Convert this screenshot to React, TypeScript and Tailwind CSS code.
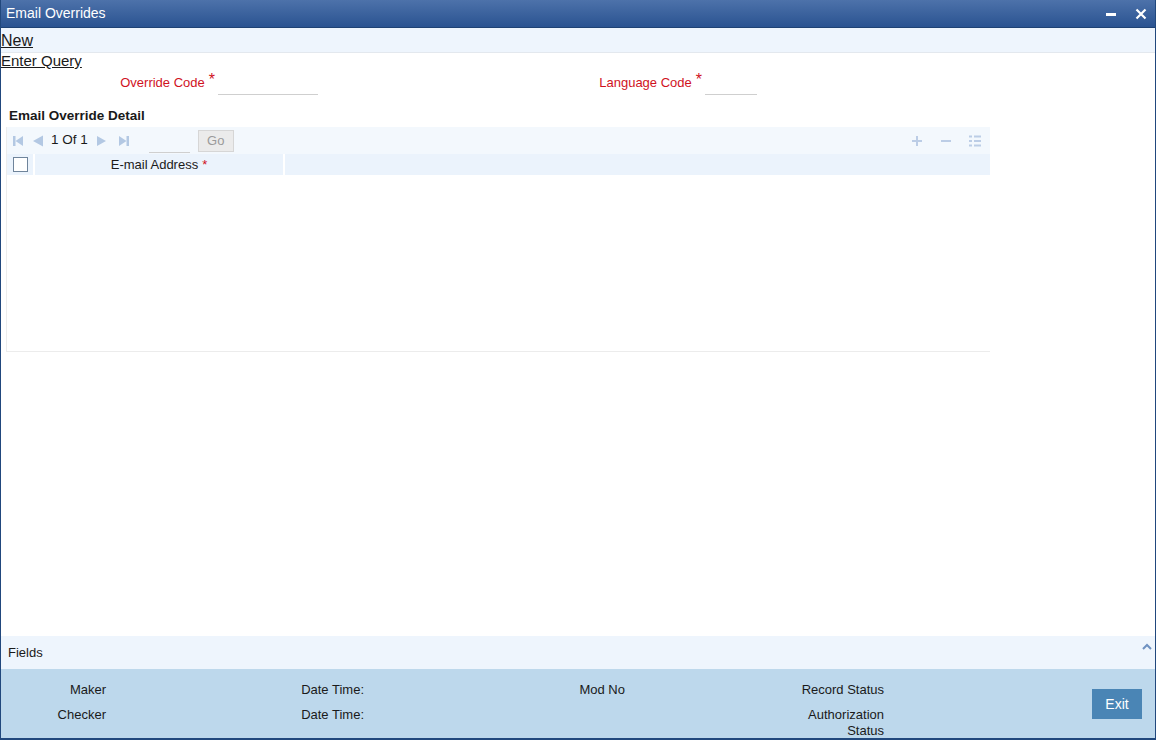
import React from "react";

const font = { fontFamily: '"Liberation Sans", Arial, sans-serif' };

function PagerIcon({ kind }: { kind: "first" | "prev" | "next" | "last" }) {
  const c = "#b3c8e3";
  return (
    <svg width="12" height="12" viewBox="0 0 12 12" className="shrink-0">
      {kind === "first" && (
        <>
          <rect x="1" y="1" width="2.5" height="10" fill={c} />
          <path d="M11 1 L3.5 6 L11 11 Z" fill={c} />
        </>
      )}
      {kind === "prev" && <path d="M11 0.5 L1 6 L11 11.5 Z" fill={c} />}
      {kind === "next" && <path d="M1 1 L10 6 L1 11 Z" fill={c} />}
      {kind === "last" && (
        <>
          <path d="M1 1 L8.5 6 L1 11 Z" fill={c} />
          <rect x="8.5" y="1" width="2.5" height="10" fill={c} />
        </>
      )}
    </svg>
  );
}

export default function App() {
  return (
    <div
      className="w-[1156px] h-[740px] flex flex-col bg-white border-x border-b-2 border-[#21487d] text-[13px] text-[#1a1a1a]"
      style={font}
    >
      {/* Title bar */}
      <div className="h-[28px] shrink-0 flex items-center justify-between pl-[5px] pr-[8px] bg-gradient-to-b from-[#4d72aa] to-[#2a5391] border-b border-[#1e4274]">
        <span className="text-white text-[14px]">Email Overrides</span>
        <div className="flex items-center gap-[18px]">
          <svg width="12" height="12" viewBox="0 0 12 12">
            <rect x="1" y="5" width="10" height="3" fill="#fff" />
          </svg>
          <svg width="12" height="12" viewBox="0 0 12 12">
            <path d="M1.5 1.5 L10.5 10.5 M10.5 1.5 L1.5 10.5" stroke="#fff" strokeWidth="2.2" />
          </svg>
        </div>
      </div>

      {/* Action links */}
      <div className="h-[25px] shrink-0 flex items-center bg-[#eef5fd] border-b border-[#e3e8ee]">
        <span className="text-[16px] underline leading-none pt-[2px]">New</span>
      </div>
      <div className="h-[14px] flex items-center">
        <span className="text-[15px] underline leading-none pt-[1px]">Enter Query</span>
      </div>

      {/* Body */}
      <div className="flex-1 flex flex-col">
        <div className="flex items-end h-[28px]">
          <div className="w-[217px] flex justify-end items-center pr-[3px] text-[#d0121e]">
            Override Code <span className="ml-[4px] relative -top-[3px] text-[16px]">*</span>
          </div>
          <div className="w-[100px] h-[24px] border-b border-[#cfcfcf]" />
          <div className="w-[387px] flex justify-end items-center pr-[3px] text-[#d0121e]">
            Language Code <span className="ml-[4px] relative -top-[3px] text-[16px]">*</span>
          </div>
          <div className="w-[52px] h-[24px] border-b border-[#cfcfcf]" />
        </div>

        <div className="pl-[8px] mt-[13px] font-bold text-[13.5px] leading-[16px]">Email Override Detail</div>

        {/* Grid */}
        <div className="ml-[5px] mt-[3px] w-[984px] h-[225px] border-l border-b border-[#ececec] flex flex-col">
          <div className="h-[27px] bg-[#f3f8fd] flex items-center pl-[5px] pr-[8px]">
            <div className="flex items-center gap-[8px]">
              <PagerIcon kind="first" />
              <PagerIcon kind="prev" />
            </div>
            <span className="ml-[7px] text-[13.5px]">1 Of 1</span>
            <div className="ml-[8px] flex items-center gap-[10px]">
              <PagerIcon kind="next" />
              <PagerIcon kind="last" />
            </div>
            <div className="ml-[19px] w-[41px] h-[21px] border-b border-[#cfcfcf] self-end mb-[1px]" />
            <div className="ml-[8px] w-[36px] h-[22px] bg-[#ebebeb] border border-[#d6d6d6] flex items-center justify-center text-[#9a9a9a] text-[13px]">
              Go
            </div>
            <div className="ml-auto flex items-center gap-[15px]">
              <svg width="14" height="14" viewBox="0 0 14 14">
                <path d="M7 2 V12 M2 7 H12" stroke="#bccde6" strokeWidth="2" />
              </svg>
              <svg width="14" height="14" viewBox="0 0 14 14">
                <path d="M2 7 H12" stroke="#bccde6" strokeWidth="2" />
              </svg>
              <svg width="14" height="14" viewBox="0 0 14 14">
                <path
                  d="M1 2.5 H4 M6 2.5 H13 M1 7 H4 M6 7 H13 M1 11.5 H4 M6 11.5 H13"
                  stroke="#bccde6"
                  strokeWidth="2"
                />
              </svg>
            </div>
          </div>
          <div className="h-[21px] flex bg-[#ebf3fc]">
            <div className="w-[28px] flex items-center justify-center border-r-2 border-white">
              <div className="w-[15px] h-[15px] bg-white border border-[#6f849b]" />
            </div>
            <div className="w-[250px] flex items-center justify-center border-r-2 border-white">
              E-mail Address <span className="ml-[4px] text-[#d0121e]">*</span>
            </div>
            <div className="flex-1" />
          </div>
          <div className="flex-1" />
        </div>
        <div className="flex-1" />
      </div>

      {/* Fields bar */}
      <div className="h-[33px] shrink-0 bg-[#eef5fd] flex items-center justify-between pl-[7px] pr-[2px]">
        <span className="pt-[1px]">Fields</span>
        <svg width="12" height="12" viewBox="0 0 12 12" className="-mt-[12px]">
          <path d="M2 8 L6 4 L10 8" stroke="#6f92c2" strokeWidth="2" fill="none" />
        </svg>
      </div>

      {/* Audit footer */}
      <div className="h-[69px] shrink-0 bg-[#bdd8ec] flex leading-[16px]">
        <div className="w-[105px] flex flex-col items-end pt-[13px] gap-[9px]">
          <span>Maker</span>
          <span>Checker</span>
        </div>
        <div className="w-[258px] flex flex-col items-end pt-[13px] gap-[9px]">
          <span>Date Time:</span>
          <span>Date Time:</span>
        </div>
        <div className="w-[261px] flex flex-col items-end pt-[13px]">
          <span>Mod No</span>
        </div>
        <div className="w-[259px] flex flex-col items-end pt-[13px] text-right">
          <span>Record Status</span>
          <span className="mt-[9px] w-[90px]">Authorization Status</span>
        </div>
        <div className="flex-1 flex justify-end items-start pt-[20px] pr-[13px]">
          <div className="w-[50px] h-[30px] bg-[#4a85b5] text-white flex items-center justify-center text-[14px]">
            Exit
          </div>
        </div>
      </div>
    </div>
  );
}
